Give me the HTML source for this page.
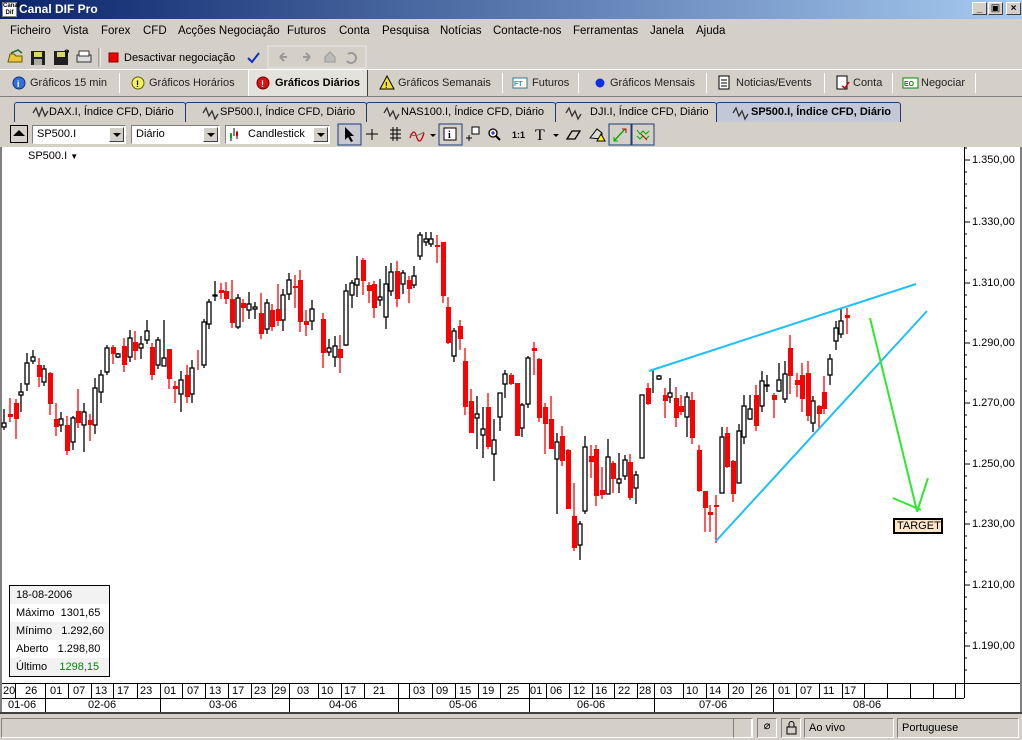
<!DOCTYPE html>
<html><head><meta charset="utf-8"><style>
*{margin:0;padding:0;box-sizing:border-box}
body{width:1022px;height:740px;background:#d4d0c8;font-family:"Liberation Sans","DejaVu Sans",sans-serif;font-size:11px;color:#000;position:relative;overflow:hidden}
.a{position:absolute}
.title{left:0;top:0;width:1022px;height:19px;background:linear-gradient(90deg,#0a246a,#a6caf0);color:#fff;font-weight:bold;font-size:12px;line-height:19px;padding-left:19px}
.wb{top:2px;width:15px;height:13px;background:#d4d0c8;border:1px solid;border-color:#fff #404040 #404040 #fff;font-size:10px;line-height:11px;text-align:center;color:#000;font-weight:bold}
.menu span{position:absolute;top:25px;font-size:11.5px}
.tab1 span{position:absolute;top:77px;font-size:11px;color:#222}
.sep{position:absolute;width:1px;background:#808080;border-right:1px solid #fff}
.stab{position:absolute;top:102px;height:20px;border:1px solid #1c3c78;border-bottom:none;background:#d4d0c8;font-size:11px;line-height:18px;padding-left:34px;border-radius:3px 3px 0 0}
.combo{position:absolute;top:125px;height:19px;background:#fff;border:1px solid;border-color:#808080 #fff #fff #808080;font-size:11px;line-height:17px;padding-left:4px}
.combo b{position:absolute;right:1px;top:1px;width:15px;height:15px;background:#d4d0c8;border:1px solid;border-color:#fff #404040 #404040 #fff}
.combo b:after{content:"";position:absolute;left:3px;top:5px;border:4px solid transparent;border-top:4px solid #000;border-bottom:none}
.yl{position:absolute;left:972px;font-size:11px}
.d{position:absolute;top:685px;font-size:11px}
.m{position:absolute;top:699px;font-size:11px}
.info div{height:18px;line-height:18px;padding-left:6px}
</style></head><body>
<div class="a title">Canal DIF Pro</div>
<div class="a" style="left:2px;top:2px;width:15px;height:15px;background:#fff;border:1px solid #888;font-size:6px;line-height:7px;color:#000;font-weight:bold;text-align:center">Canal<br>Dif</div>
<div class="a wb" style="left:972px">_</div>
<div class="a wb" style="left:988px">&#9635;</div>
<div class="a wb" style="left:1006px">×</div>

<div class="menu">
<span style="left:10px">Ficheiro</span><span style="left:63px">Vista</span><span style="left:101px">Forex</span><span style="left:143px">CFD</span><span style="left:178px">Acções Negociação</span><span style="left:287px">Futuros</span><span style="left:339px">Conta</span><span style="left:382px">Pesquisa</span><span style="left:440px">Notícias</span><span style="left:493px">Contacte-nos</span><span style="left:573px">Ferramentas</span><span style="left:650px">Janela</span><span style="left:696px">Ajuda</span>
</div>

<div class="a" style="left:0;top:45px;width:366px;height:24px;background:#d4d0c8"></div>
<svg class="a" style="left:0;top:45px" width="370" height="24">
<path d="M8 17 L10 9 H14 L16 11 H22 V17 Z" fill="#e8c640" stroke="#6a5a00"/>
<path d="M11 8 L18 5 L22 8" fill="none" stroke="#2a6a2a" stroke-width="1.5"/>
<rect x="31" y="6" width="14" height="14" fill="#202020"/><rect x="34" y="7" width="8" height="5" fill="#d8d860"/><rect x="34" y="14" width="8" height="6" fill="#aaa"/>
<rect x="54" y="6" width="14" height="14" fill="#202020"/><rect x="57" y="7" width="8" height="5" fill="#d8d860"/><text x="64" y="11" font-size="9" font-weight="bold">?</text>
<rect x="77" y="10" width="14" height="7" fill="#ddd" stroke="#333"/><rect x="79" y="6" width="10" height="5" fill="#fff" stroke="#333"/>
<line x1="99" y1="3" x2="99" y2="22" stroke="#808080"/><line x1="100" y1="3" x2="100" y2="22" stroke="#fff"/>
<rect x="109" y="8" width="9" height="9" fill="#e00" stroke="#800"/>
<text x="124" y="16" font-size="11" font-family="Liberation Sans">Desactivar negociação</text>
<path d="M248 13 L252 17 L259 8" fill="none" stroke="#1030c0" stroke-width="2"/>
<rect x="268" y="1" width="98" height="22" fill="#d4d0c8" stroke="#e8e8e8"/>
<path d="M280 12 h7 M280 12 l4 -4 M280 12 l4 4" stroke="#999" stroke-width="2" fill="none"/>
<path d="M310 12 h-7 M310 12 l-4 -4 M310 12 l-4 4" stroke="#999" stroke-width="2" fill="none"/>
<path d="M325 12 l5 -5 l5 5 v5 h-10 z" fill="#bbb" stroke="#999"/>
<path d="M348 9 a5 5 0 1 1 -1 7" stroke="#999" stroke-width="2" fill="none"/>
</svg>

<div class="a" style="left:0;top:69px;width:1022px;height:1px;background:#fff"></div>
<div class="a" style="left:248px;top:70px;width:120px;height:27px;background:#e4e2dc;border-left:1px solid #fff;border-right:1px solid #404040"></div>
<div class="a" style="left:0;top:96px;width:1022px;height:1px;background:#808080"></div>
<div class="tab1">
<span style="left:30px">Gráficos 15 min</span><span style="left:149px">Gráficos Horários</span><span style="left:275px;font-weight:bold;color:#000">Gráficos Diários</span><span style="left:398px">Gráficos Semanais</span><span style="left:532px">Futuros</span><span style="left:610px">Gráficos Mensais</span><span style="left:736px">Noticias/Events</span><span style="left:853px">Conta</span><span style="left:921px">Negociar</span>
</div>
<div class="sep" style="left:119px;top:73px;height:20px"></div>
<div class="sep" style="left:502px;top:73px;height:20px"></div>
<div class="sep" style="left:578px;top:73px;height:20px"></div>
<div class="sep" style="left:706px;top:73px;height:20px"></div>
<div class="sep" style="left:824px;top:73px;height:20px"></div>
<div class="sep" style="left:892px;top:73px;height:20px"></div>
<div class="sep" style="left:975px;top:73px;height:20px"></div>
<svg class="a" style="left:0;top:70px" width="1022" height="27">
<circle cx="19" cy="13" r="6" fill="#3070e0" stroke="#103080"/><text x="17" y="17" font-size="9" fill="#fff" font-weight="bold">i</text>
<circle cx="138" cy="13" r="6" fill="#f0f060" stroke="#606000"/><text x="136" y="17" font-size="9" font-weight="bold">!</text>
<circle cx="263" cy="13" r="6" fill="#e01010" stroke="#600"/><text x="261" y="17" font-size="9" fill="#fff" font-weight="bold">!</text>
<path d="M387 6 L394 19 H380 Z" fill="#f8e020" stroke="#000"/><text x="385" y="18" font-size="8" font-weight="bold">!</text>
<rect x="513" y="8" width="14" height="10" fill="#fff" stroke="#2a7a9a"/><text x="514" y="16" font-size="7" fill="#2a9ac0" font-weight="bold">FT</text>
<circle cx="600" cy="13" r="4.5" fill="#1030e0"/>
<rect x="719" y="6" width="10" height="13" fill="#fff" stroke="#000"/><path d="M721 10h6M721 13h6M721 16h6" stroke="#000"/>
<rect x="837" y="6" width="10" height="13" fill="#fff" stroke="#000"/><path d="M842 16 l3 2 l4 -6" stroke="#c00" fill="none" stroke-width="1.5"/>
<rect x="903" y="8" width="15" height="10" fill="#fff" stroke="#080"/><text x="904" y="16" font-size="7" fill="#080" font-weight="bold">EO</text>
</svg>

<div class="a" style="left:0;top:97px;width:1022px;height:25px;background:#d4d0c8"></div>
<div class="stab" style="left:14px;width:172px">DAX.I, Índice CFD, Diário</div>
<div class="stab" style="left:185px;width:182px">SP500.I, Índice CFD, Diário</div>
<div class="stab" style="left:366px;width:190px">NAS100.I, Índice CFD, Diário</div>
<div class="stab" style="left:555px;width:162px">DJI.I, Índice CFD, Diário</div>
<div class="stab" style="left:716px;width:185px;background:#c2c8d8;font-weight:bold">SP500.I, Índice CFD, Diário</div>
<svg class="a" style="left:0;top:100px" width="1022" height="22">
<g fill="none" stroke="#333" stroke-width="1.3">
<path d="M33 13 l3 -5 l3 8 l3 -8 l3 8 l3 -5"/><path d="M203 13 l3 -5 l3 8 l3 -5 l3 8 l3 -5"/><path d="M384 13 l3 -5 l3 8 l3 -5 l3 8 l3 -5"/><path d="M566 13 l3 -5 l3 8 l3 -5 l3 8 l3 -5"/><path d="M733 13 l3 -5 l3 8 l3 -5 l3 8 l3 -5"/>
</g></svg>

<div class="a" style="left:0;top:122px;width:1022px;height:25px;background:#d4d0c8"></div>
<div class="a" style="left:10px;top:125px;width:18px;height:18px;background:#d4d0c8;border:1px solid #000"></div>
<div class="a" style="left:13px;top:130px;border:6px solid transparent;border-bottom:6px solid #000;border-top:none"></div>
<div class="combo" style="left:32px;width:94px">SP500.I<b></b></div>
<div class="combo" style="left:131px;width:89px">Diário<b></b></div>
<div class="combo" style="left:225px;width:105px;padding-left:22px">Candlestick<b></b></div>
<svg class="a" style="left:0;top:122px" width="700" height="25">
<path d="M231 11v8M234 6v8M237 9v8" stroke="#000"/><rect x="230" y="12" width="2" height="4" fill="#0a0"/><rect x="236" y="10" width="2" height="4" fill="#c00"/>
<rect x="338" y="2" width="23" height="21" fill="#c8c8d0" stroke="#1c3c78"/>
<path d="M345 5 v13 l3 -3 l3 5 l2 -1 l-3 -5 h4 z" fill="#000"/>
<path d="M372 7v11M366 12h12" stroke="#000"/>
<path d="M390 8h11M390 12h11M390 16h11M393 5v14M397 5v14" stroke="#000" stroke-width="1"/>
<path d="M410 16 q4 -12 7 0 q3 8 7 -5" stroke="#c00" fill="none" stroke-width="1.3"/><path d="M410 12 q5 4 14 -2" stroke="#666" fill="none"/>
<path d="M430 12 l3 3 l3 -3z" fill="#000"/>
<rect x="439" y="2" width="23" height="21" fill="#d4d0c8" stroke="#1c3c78"/><rect x="444" y="6" width="12" height="12" fill="#fff" stroke="#000"/><text x="448" y="16" font-size="10" font-weight="bold" font-family="Liberation Serif">i</text>
<path d="M466 16h6M469 13v6" stroke="#000"/><rect x="472" y="5" width="7" height="7" fill="#fff" stroke="#000"/>
<circle cx="493" cy="11" r="4" fill="#fff" stroke="#000" stroke-width="1.3"/><path d="M496 14 l4 4" stroke="#000" stroke-width="2"/><path d="M491 11h4M493 9v4" stroke="#00c"/>
<text x="512" y="16" font-size="9" font-weight="bold">1:1</text>
<text x="535" y="18" font-size="16" font-family="Liberation Serif">T</text><path d="M553 12 l3 3 l3 -3z" fill="#000"/>
<path d="M567 17 l5 -8 h8 l-5 8 z" fill="none" stroke="#000" stroke-width="1.3"/>
<path d="M590 16 l7 -9 l5 4 v6z" fill="#ddd" stroke="#000"/><path d="M597 19 l4 -7 l4 7z" fill="#ff0" stroke="#000"/>
<rect x="609" y="2" width="22" height="21" fill="#d4d0c8" stroke="#1c3c78"/><path d="M614 19 l11 -12" stroke="#0a0" stroke-width="1.3"/><path d="M622 7 h4 v4" stroke="#c00" fill="none"/><path d="M614 15 v4 h4" stroke="#0a0" fill="none"/>
<rect x="632" y="2" width="22" height="21" fill="#d4d0c8" stroke="#1c3c78"/><path d="M637 8 l3 4 l3 -3 l3 3 l3 -3 M637 14 l3 3 l3 -3 l3 3 l3 -3" stroke="#0a0" fill="none"/><path d="M641 12 l6 6" stroke="#c00"/>
</svg>

<div class="a" style="left:0;top:147px;width:1022px;height:566px;background:#fff;border-left:2px solid #808080;border-right:2px solid #808080"></div>
<div class="a" style="left:28px;top:150px;font-size:11px">SP500.I <span style="font-size:8px">▼</span></div>
<svg class="a" style="left:0;top:0" width="1022" height="740">
<line x1="964.5" y1="147" x2="964.5" y2="698" stroke="#000"/>
<g stroke="#000">
<path d="M964 160h6M964 222h6M964 283h6M964 343h6M964 403h6M964 464h6M964 524h6M964 585h6M964 646h6"/>
<path d="M964 148h3M964 172h3M964 184h3M964 196h3M964 208h3M964 234h3M964 246h3M964 258h3M964 270h3M964 295h3M964 307h3M964 319h3M964 331h3M964 355h3M964 367h3M964 379h3M964 391h3M964 415h3M964 427h3M964 439h3M964 451h3M964 476h3M964 488h3M964 500h3M964 512h3M964 536h3M964 548h3M964 560h3M964 572h3M964 597h3M964 609h3M964 621h3M964 633h3M964 658h3M964 670h3"/>
</g>
<g stroke-width="1.3">
<g stroke="#000" fill="none">
<path d="M4 409V430M21 383V412M27 353V391M33 350V364M44 365V386M61 412V432M73 416V450M84 403V452M95 378V434M101 370V403M107 345V375M118 353V358M130 330V362M141 336V359M147 320V344M158 337V369M164 320V364M181 371V412M192 360V403M204 319V368M209 299V329M215 281V301M238 294V329M249 292V319M255 302V319M267 299V334M283 289V331M289 273V300M312 300V330M329 339V356M335 336V367M346 284V346M352 280V308M357 256V297M380 279V306M386 266V329M391 263V296M403 270V294M414 266V288M420 232V260M426 232V246M431 232V247M454 328V362M477 396V449M483 407V458M494 419V481M500 393V431M505 370V398M522 403V437M528 356V408M557 433V514M580 521V560M585 436V514M608 439V494M619 453V493M625 455V480M636 471V504M642 395V458M653 370V393M659 375V380M670 378V403M687 392V437M722 427V493M739 424V483M744 395V444M750 395V420M762 371V412M767 375V392M779 363V392M785 361V403M813 396V432M830 354V385M836 321V350M841 309V338"/>
</g>
<g stroke="#f00" fill="none">
<path d="M10 398V422M16 399V439M39 358V387M50 372V415M56 403V436M67 416V455M78 389V428M90 414V441M113 345V364M124 338V372M135 331V360M152 343V380M169 349V389M175 381V403M187 365V403M198 350V370M221 283V299M226 282V304M232 280V328M243 299V322M261 293V339M272 304V331M278 284V326M295 275V308M300 270V332M306 310V336M323 313V368M340 335V373M363 258V295M369 282V303M374 281V318M397 261V307M409 276V303M437 235V263M443 242V303M448 297V344M460 320V350M465 348V415M471 389V433M488 393V449M511 373V385M517 383V436M534 342V375M539 358V422M545 403V454M551 396V449M562 426V466M568 449V509M574 483V551M591 445V478M596 445V506M602 467V499M613 461V493M630 454V500M648 383V405M665 388V418M676 387V427M681 395V415M692 392V444M699 445V492M705 491V532M710 505V532M716 495V543M727 427V468M733 460V502M756 385V431M774 393V418M790 335V394M797 373V397M802 363V412M808 361V421M819 405V428M824 376V414M847 308V334"/>
</g>
<g fill="#fff" stroke="#000">
<rect x="2" y="423" width="4" height="4"/><rect x="19" y="392" width="4" height="3"/><rect x="25" y="363" width="4" height="21"/><rect x="31" y="357" width="4" height="4"/><rect x="42" y="369" width="4" height="13"/><rect x="59" y="419" width="4" height="6"/><rect x="71" y="418" width="4" height="24"/><rect x="82" y="412" width="4" height="13"/><rect x="93" y="388" width="4" height="37"/><rect x="99" y="375" width="4" height="17"/><rect x="105" y="348" width="4" height="24"/><rect x="116" y="354" width="4" height="3"/><rect x="128" y="338" width="4" height="19"/><rect x="139" y="344" width="4" height="4"/><rect x="145" y="331" width="4" height="9"/><rect x="156" y="340" width="4" height="25"/><rect x="162" y="358" width="4" height="8"/><rect x="179" y="380" width="4" height="14"/><rect x="190" y="368" width="4" height="26"/><rect x="202" y="322" width="4" height="43"/><rect x="207" y="302" width="4" height="22"/><rect x="213" y="295" width="4" height="1"/><rect x="236" y="298" width="4" height="29"/><rect x="247" y="304" width="4" height="6"/><rect x="253" y="307" width="4" height="2"/><rect x="265" y="303" width="4" height="26"/><rect x="281" y="295" width="4" height="25"/><rect x="287" y="280" width="4" height="14"/><rect x="310" y="309" width="4" height="12"/><rect x="327" y="348" width="4" height="4"/><rect x="333" y="346" width="4" height="11"/><rect x="344" y="291" width="4" height="54"/><rect x="350" y="283" width="4" height="12"/><rect x="355" y="279" width="4" height="6"/><rect x="378" y="297" width="4" height="3"/><rect x="384" y="284" width="4" height="33"/><rect x="389" y="272" width="4" height="19"/><rect x="401" y="273" width="4" height="11"/><rect x="412" y="276" width="4" height="9"/><rect x="418" y="235" width="4" height="21"/><rect x="424" y="239" width="4" height="3"/><rect x="429" y="239" width="4" height="5"/><rect x="452" y="331" width="4" height="25"/><rect x="475" y="414" width="4" height="4"/><rect x="481" y="429" width="4" height="6"/><rect x="492" y="440" width="4" height="14"/><rect x="498" y="393" width="4" height="24"/><rect x="503" y="374" width="4" height="10"/><rect x="520" y="405" width="4" height="23"/><rect x="526" y="358" width="4" height="46"/><rect x="555" y="442" width="4" height="17"/><rect x="578" y="524" width="4" height="21"/><rect x="583" y="447" width="4" height="64"/><rect x="606" y="457" width="4" height="37"/><rect x="617" y="479" width="4" height="4"/><rect x="623" y="460" width="4" height="16"/><rect x="634" y="475" width="4" height="13"/><rect x="640" y="395" width="4" height="63"/><rect x="657" y="376" width="4" height="3"/><rect x="668" y="393" width="4" height="4"/><rect x="685" y="397" width="4" height="20"/><rect x="720" y="437" width="4" height="56"/><rect x="737" y="431" width="4" height="52"/><rect x="742" y="406" width="4" height="31"/><rect x="748" y="409" width="4" height="10"/><rect x="760" y="381" width="4" height="25"/><rect x="765" y="385" width="4" height="1"/><rect x="777" y="380" width="4" height="11"/><rect x="783" y="374" width="4" height="25"/><rect x="811" y="401" width="4" height="22"/><rect x="828" y="359" width="4" height="16"/><rect x="834" y="328" width="4" height="13"/><rect x="839" y="321" width="4" height="13"/>
</g>
<g fill="#f00">
<rect x="8" y="414" width="5" height="3"/><rect x="14" y="403" width="5" height="16"/><rect x="37" y="365" width="5" height="12"/><rect x="48" y="373" width="5" height="31"/><rect x="54" y="419" width="5" height="8"/><rect x="65" y="425" width="5" height="26"/><rect x="76" y="411" width="5" height="12"/><rect x="88" y="420" width="5" height="5"/><rect x="111" y="347" width="5" height="7"/><rect x="122" y="346" width="5" height="19"/><rect x="133" y="342" width="5" height="9"/><rect x="150" y="347" width="5" height="28"/><rect x="167" y="349" width="5" height="30"/><rect x="173" y="386" width="5" height="3"/><rect x="185" y="375" width="5" height="22"/><rect x="219" y="290" width="5" height="3"/><rect x="224" y="291" width="5" height="8"/><rect x="230" y="299" width="5" height="24"/><rect x="241" y="303" width="5" height="5"/><rect x="259" y="313" width="5" height="21"/><rect x="270" y="310" width="5" height="17"/><rect x="276" y="309" width="5" height="12"/><rect x="293" y="286" width="5" height="2"/><rect x="298" y="280" width="5" height="42"/><rect x="304" y="321" width="5" height="4"/><rect x="321" y="319" width="5" height="34"/><rect x="338" y="349" width="5" height="9"/><rect x="361" y="260" width="5" height="21"/><rect x="367" y="285" width="5" height="6"/><rect x="372" y="284" width="5" height="24"/><rect x="395" y="271" width="5" height="28"/><rect x="407" y="280" width="5" height="9"/><rect x="435" y="245" width="5" height="2"/><rect x="441" y="242" width="5" height="54"/><rect x="446" y="307" width="5" height="36"/><rect x="458" y="326" width="5" height="13"/><rect x="463" y="361" width="5" height="46"/><rect x="469" y="401" width="5" height="32"/><rect x="486" y="407" width="5" height="40"/><rect x="509" y="375" width="5" height="9"/><rect x="515" y="383" width="5" height="53"/><rect x="532" y="348" width="5" height="3"/><rect x="537" y="359" width="5" height="59"/><rect x="543" y="407" width="5" height="17"/><rect x="549" y="419" width="5" height="30"/><rect x="560" y="436" width="5" height="25"/><rect x="566" y="450" width="5" height="59"/><rect x="572" y="516" width="5" height="32"/><rect x="589" y="456" width="5" height="6"/><rect x="594" y="449" width="5" height="47"/><rect x="600" y="490" width="5" height="5"/><rect x="611" y="463" width="5" height="16"/><rect x="628" y="462" width="5" height="36"/><rect x="646" y="388" width="5" height="16"/><rect x="663" y="395" width="5" height="6"/><rect x="674" y="398" width="5" height="20"/><rect x="679" y="406" width="5" height="6"/><rect x="690" y="400" width="5" height="38"/><rect x="697" y="450" width="5" height="41"/><rect x="703" y="491" width="5" height="17"/><rect x="708" y="512" width="5" height="3"/><rect x="714" y="505" width="5" height="2"/><rect x="725" y="433" width="5" height="34"/><rect x="731" y="461" width="5" height="33"/><rect x="754" y="395" width="5" height="31"/><rect x="772" y="395" width="5" height="5"/><rect x="788" y="348" width="5" height="28"/><rect x="795" y="380" width="5" height="5"/><rect x="800" y="375" width="5" height="24"/><rect x="806" y="373" width="5" height="43"/><rect x="817" y="406" width="5" height="8"/><rect x="822" y="392" width="5" height="17"/><rect x="845" y="315" width="5" height="3"/>
</g>
</g>
<g stroke="#1ec0f5" stroke-width="2"><line x1="649" y1="371" x2="916" y2="284"/><line x1="716" y1="541" x2="927" y2="311"/></g>
<g stroke="#2ee82e" stroke-width="2" fill="none"><line x1="870" y1="318" x2="917" y2="511"/><path d="M893 498 L921 510 M928 478 L917 512"/></g>
</svg>
<div class="a" style="left:893px;top:518px;width:50px;height:16px;background:#fde5c8;border:2px solid #000;font-size:11px;line-height:12px;padding-left:2px">TARGET</div>

<div class="yl" style="top:154px">1.350,00</div>
<div class="yl" style="top:216px">1.330,00</div>
<div class="yl" style="top:277px">1.310,00</div>
<div class="yl" style="top:337px">1.290,00</div>
<div class="yl" style="top:397px">1.270,00</div>
<div class="yl" style="top:458px">1.250,00</div>
<div class="yl" style="top:518px">1.230,00</div>
<div class="yl" style="top:579px">1.210,00</div>
<div class="yl" style="top:640px">1.190,00</div>

<div class="a info" style="left:9px;top:585px;width:101px;height:92px;border:1px solid #000;background:#fff;font-size:11px">
<div style="background:#f2f2f2">18-08-2006</div>
<div>Máximo&nbsp; 1301,65</div>
<div style="background:#f2f2f2">Mínimo&nbsp;&nbsp; 1.292,60</div>
<div>Aberto&nbsp;&nbsp; 1.298,80</div>
<div style="background:#f2f2f2">Último&nbsp;&nbsp;&nbsp; <span style="color:#080">1298,15</span></div>
</div>

<div class="a" style="left:2px;top:683px;width:1018px;height:1px;background:#000"></div>
<div class="a" style="left:2px;top:698px;width:962px;height:1px;background:#000"></div>
<div class="a" style="left:0;top:712px;width:1022px;height:2px;background:#404040"></div>
<svg class="a" style="left:0;top:684px" width="1022" height="28">
<g stroke="#000"><path d="M15.5 0v14M45.5 0v28M68.5 0v14M91.5 0v14M113.5 0v14M137.5 0v14M160.5 0v28M182.5 0v14M205.5 0v14M228.5 0v14M251.5 0v14M272.5 0v14M289.5 0v28M318.5 0v14M341.5 0v14M364.5 0v14M398.5 0v28M409.5 0v14M432.5 0v14M455.5 0v14M478.5 0v14M500.5 0v14M529.5 0v28M546.5 0v14M569.5 0v14M592.5 0v14M614.5 0v14M637.5 0v14M654.5 0v28M683.5 0v14M706.5 0v14M728.5 0v14M751.5 0v14M773.5 0v28M796.5 0v14M819.5 0v14M842.5 0v14M864.5 0v14M887.5 0v14M910.5 0v14M933.5 0v14M955.5 0v14"/></g>
</svg>
<div class="d" style="left:3px">20</div><div class="d" style="left:25px">26</div><div class="d" style="left:50px">01</div><div class="d" style="left:73px">07</div><div class="d" style="left:95px">13</div><div class="d" style="left:117px">17</div><div class="d" style="left:140px">23</div><div class="d" style="left:164px">01</div><div class="d" style="left:187px">07</div><div class="d" style="left:209px">13</div><div class="d" style="left:232px">17</div><div class="d" style="left:254px">23</div><div class="d" style="left:274px">29</div><div class="d" style="left:297px">03</div><div class="d" style="left:321px">10</div><div class="d" style="left:344px">17</div><div class="d" style="left:373px">21</div><div class="d" style="left:413px">03</div><div class="d" style="left:436px">09</div><div class="d" style="left:459px">15</div><div class="d" style="left:482px">19</div><div class="d" style="left:507px">25</div><div class="d" style="left:530px">01</div><div class="d" style="left:550px">06</div><div class="d" style="left:573px">12</div><div class="d" style="left:595px">16</div><div class="d" style="left:618px">22</div><div class="d" style="left:639px">28</div><div class="d" style="left:660px">03</div><div class="d" style="left:686px">10</div><div class="d" style="left:709px">14</div><div class="d" style="left:732px">20</div><div class="d" style="left:755px">26</div><div class="d" style="left:778px">01</div><div class="d" style="left:800px">07</div><div class="d" style="left:823px">11</div><div class="d" style="left:844px">17</div>
<div class="m" style="left:8px">01-06</div><div class="m" style="left:88px">02-06</div><div class="m" style="left:209px">03-06</div><div class="m" style="left:329px">04-06</div><div class="m" style="left:449px">05-06</div><div class="m" style="left:577px">06-06</div><div class="m" style="left:699px">07-06</div><div class="m" style="left:853px">08-06</div>

<div class="a" style="left:1px;top:718px;width:751px;height:20px;border:1px solid;border-color:#808080 #fff #fff #808080"></div>
<div class="a" style="left:733px;top:718px;width:20px;height:20px;border:1px solid;border-color:#808080 #fff #fff #808080"></div>
<div class="a" style="left:757px;top:718px;width:20px;height:20px;border:1px solid;border-color:#808080 #fff #fff #808080;font-size:11px;text-align:center">⌀</div>
<div class="a" style="left:781px;top:718px;width:20px;height:20px;border:1px solid;border-color:#808080 #fff #fff #808080"></div>
<svg class="a" style="left:785px;top:721px" width="14" height="14"><rect x="2" y="6" width="9" height="7" fill="none" stroke="#000"/><path d="M4 6 V3 a2.5 2.5 0 0 1 5 0 V6" fill="none" stroke="#000"/></svg>
<div class="a" style="left:804px;top:718px;width:90px;height:20px;border:1px solid;border-color:#808080 #fff #fff #808080;font-size:11px;line-height:18px;padding-left:4px">Ao vivo</div>
<div class="a" style="left:897px;top:718px;width:122px;height:20px;border:1px solid;border-color:#808080 #fff #fff #808080;font-size:11px;line-height:18px;padding-left:4px">Portuguese</div>
</body></html>
